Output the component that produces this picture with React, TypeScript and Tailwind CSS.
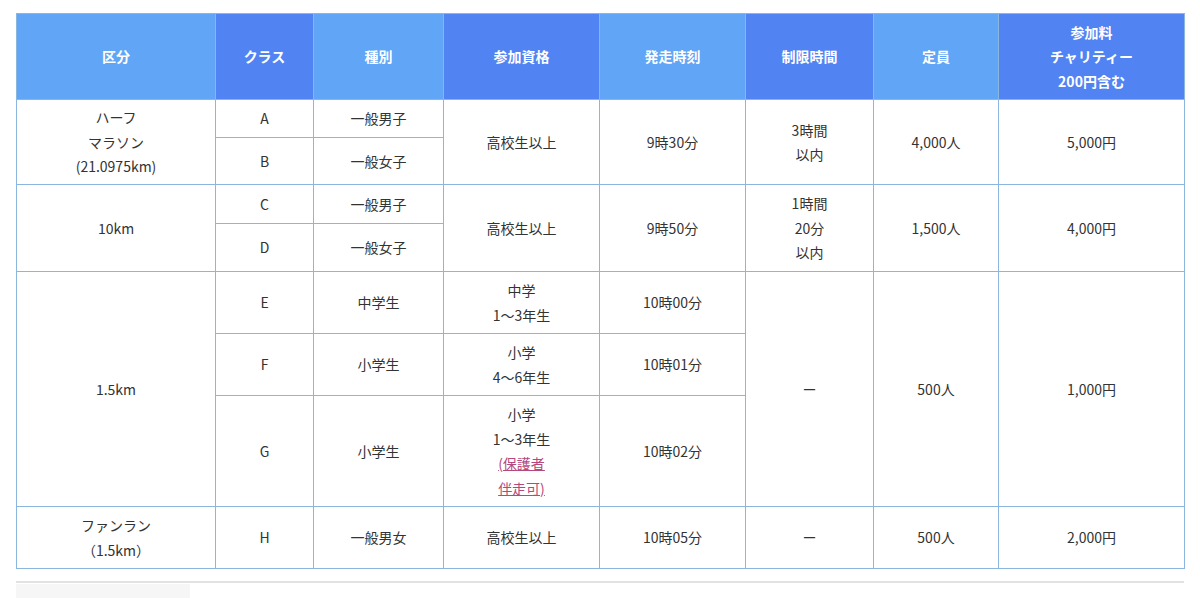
import React from 'react'

const th = 'border border-[#8ab6e0] text-white font-bold text-[14px] leading-[24.5px] text-center align-middle px-2'
const td = 'border border-[#8ab6e0] text-[#333] text-[14px] leading-[24.5px] text-center align-middle px-2 py-[5px]'
const light = 'bg-[#60a5f6]'
const dark = 'bg-[#5283f3]'

export default function App() {
    return (
        <div className="min-h-[598px] bg-white px-4 pt-[13px]" style={{ fontFamily: '"Noto Sans CJK JP", "Noto Sans", sans-serif' }}>
            <table className="w-[1168px] table-fixed border-collapse border border-[#8ab6e0]">
                <colgroup>
                    <col className="w-[199px]" />
                    <col className="w-[98px]" />
                    <col className="w-[130px]" />
                    <col className="w-[156px]" />
                    <col className="w-[146px]" />
                    <col className="w-[128px]" />
                    <col className="w-[125px]" />
                    <col className="w-[186px]" />
                </colgroup>
                <thead>
                    <tr className="h-[86px]">
                        <th className={`${th} ${light}`}>区分</th>
                        <th className={`${th} ${dark}`}>クラス</th>
                        <th className={`${th} ${light}`}>種別</th>
                        <th className={`${th} ${dark}`}>参加資格</th>
                        <th className={`${th} ${light}`}>発走時刻</th>
                        <th className={`${th} ${dark}`}>制限時間</th>
                        <th className={`${th} ${light}`}>定員</th>
                        <th className={`${th} ${dark}`}>参加料<br />チャリティー<br />200円含む</th>
                    </tr>
                </thead>
                <tbody>
                    <tr className="h-[38px]">
                        <td className={td} rowSpan={2}>ハーフ<br />マラソン<br />(21.0975km)</td>
                        <td className={td}>A</td>
                        <td className={td}>一般男子</td>
                        <td className={td} rowSpan={2}>高校生以上</td>
                        <td className={td} rowSpan={2}>9時30分</td>
                        <td className={td} rowSpan={2}>3時間<br />以内</td>
                        <td className={td} rowSpan={2}>4,000人</td>
                        <td className={td} rowSpan={2}>5,000円</td>
                    </tr>
                    <tr className="h-[47px]">
                        <td className={td}>B</td>
                        <td className={td}>一般女子</td>
                    </tr>
                    <tr className="h-[39px]">
                        <td className={td} rowSpan={2}>10km</td>
                        <td className={td}>C</td>
                        <td className={td}>一般男子</td>
                        <td className={td} rowSpan={2}>高校生以上</td>
                        <td className={td} rowSpan={2}>9時50分</td>
                        <td className={td} rowSpan={2}>1時間<br />20分<br />以内</td>
                        <td className={td} rowSpan={2}>1,500人</td>
                        <td className={td} rowSpan={2}>4,000円</td>
                    </tr>
                    <tr className="h-[48px]">
                        <td className={td}>D</td>
                        <td className={td}>一般女子</td>
                    </tr>
                    <tr className="h-[62px]">
                        <td className={td} rowSpan={3}>1.5km</td>
                        <td className={td}>E</td>
                        <td className={td}>中学生</td>
                        <td className={td}>中学<br />1～3年生</td>
                        <td className={td}>10時00分</td>
                        <td className={td} rowSpan={3}>ー</td>
                        <td className={td} rowSpan={3}>500人</td>
                        <td className={td} rowSpan={3}>1,000円</td>
                    </tr>
                    <tr className="h-[62px]">
                        <td className={td}>F</td>
                        <td className={td}>小学生</td>
                        <td className={td}>小学<br />4～6年生</td>
                        <td className={td}>10時01分</td>
                    </tr>
                    <tr className="h-[111px]">
                        <td className={td}>G</td>
                        <td className={td}>小学生</td>
                        <td className={td}>
                            小学<br />1～3年生<br />
                            <a href="#" className="text-[#b5487c] underline">(保護者<br />伴走可)</a>
                        </td>
                        <td className={td}>10時02分</td>
                    </tr>
                    <tr className="h-[62px]">
                        <td className={td}>ファンラン<br />（1.5km）</td>
                        <td className={td}>H</td>
                        <td className={td}>一般男女</td>
                        <td className={td}>高校生以上</td>
                        <td className={td}>10時05分</td>
                        <td className={td}>ー</td>
                        <td className={td}>500人</td>
                        <td className={td}>2,000円</td>
                    </tr>
                </tbody>
            </table>
            <div className="mt-[12px] h-[2px] w-[1168px] bg-[#e2e2e2]" />
            <div className="mt-[1px] h-[14px] w-[174px] bg-[#f6f6f6]" />
        </div>
    )
}
